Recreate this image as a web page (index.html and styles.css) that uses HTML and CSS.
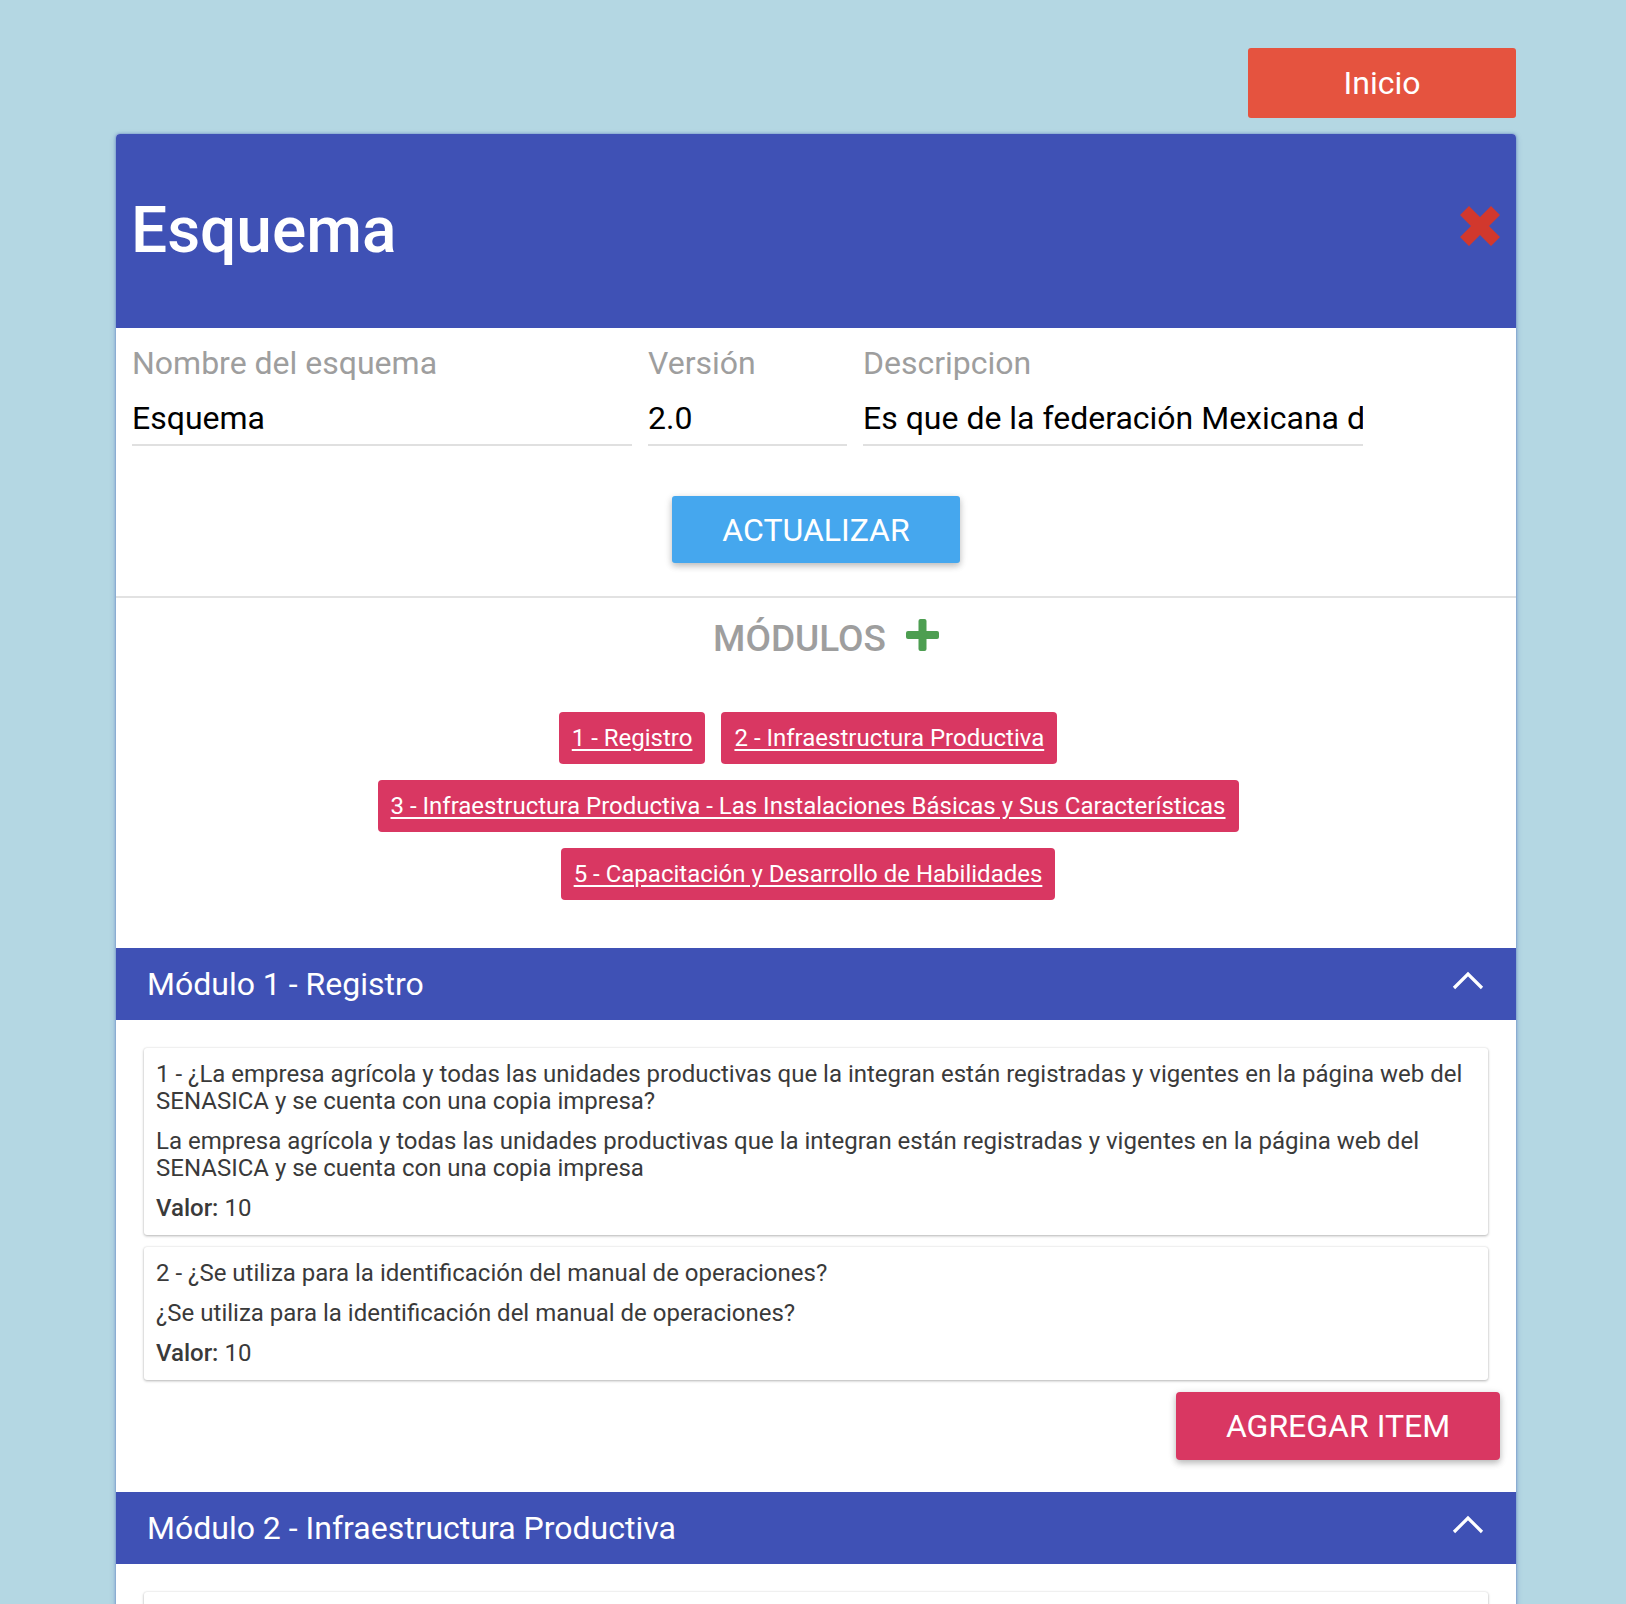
FILE: index.html
```html
<!DOCTYPE html>
<html lang="es">
<head>
<meta charset="utf-8">
<title>Esquema</title>
<link rel="stylesheet" href="styles.css">
</head>
<body>
<div class="page">
  <div class="topbar">
    <a class="btn-inicio" href="#">Inicio</a>
  </div>
  <div class="card">
    <div class="card-header">
      <h1 class="card-title">Esquema</h1>
      <svg class="close-icon" width="40" height="40" viewBox="0 0 40 40" aria-hidden="true">
        <path d="M9 0 L20 11 L31 0 L40 9 L29 20 L40 31 L31 40 L20 29 L9 40 L0 31 L11 20 L0 9 Z" fill="#d2382d"/>
      </svg>
    </div>

    <div class="form">
      <div class="fields">
        <div class="field field-name">
          <div class="field-label">Nombre del esquema</div>
          <div class="field-value">Esquema</div>
        </div>
        <div class="field field-version">
          <div class="field-label">Versión</div>
          <div class="field-value">2.0</div>
        </div>
        <div class="field field-desc">
          <div class="field-label">Descripcion</div>
          <div class="field-value">Es que de la federación Mexicana de productores agrícolas</div>
        </div>
      </div>
      <div class="form-actions">
        <button class="btn-update" type="button">ACTUALIZAR</button>
      </div>
    </div>

    <div class="modules">
      <h2 class="modules-title">MÓDULOS<svg class="plus-icon" width="33" height="32" viewBox="0 0 33 32" aria-hidden="true"><rect x="0" y="12" width="33" height="8" rx="2" fill="#4d9e51"/><rect x="12.5" y="0" width="8" height="32" rx="2" fill="#4d9e51"/></svg></h2>
      <div class="chips">
        <a class="chip" href="#">1 - Registro</a>
        <a class="chip" href="#">2 - Infraestructura Productiva</a>
        <a class="chip" href="#">3 - Infraestructura Productiva - Las Instalaciones Básicas y Sus Características</a>
        <a class="chip" href="#">5 - Capacitación y Desarrollo de Habilidades</a>
      </div>
    </div>

    <section class="module">
      <div class="module-header">
        <span class="module-name">Módulo 1 - Registro</span>
        <svg class="chevron" width="32" height="19" viewBox="0 0 32 19" aria-hidden="true"><polyline points="2,17 16,3 30,17" fill="none" stroke="#ffffff" stroke-width="3.2"/></svg>
      </div>
      <div class="module-body">
        <div class="item">
          <p class="item-q">1 - ¿La empresa agrícola y todas las unidades productivas que la integran están registradas y vigentes en la página web del SENASICA y se cuenta con una copia impresa?</p>
          <p class="item-d">La empresa agrícola y todas las unidades productivas que la integran están registradas y vigentes en la página web del SENASICA y se cuenta con una copia impresa</p>
          <p class="item-v"><span class="item-v-label">Valor:</span> 10</p>
        </div>
        <div class="item">
          <p class="item-q">2 - ¿Se utiliza para la identificación del manual de operaciones?</p>
          <p class="item-d">¿Se utiliza para la identificación del manual de operaciones?</p>
          <p class="item-v"><span class="item-v-label">Valor:</span> 10</p>
        </div>
        <div class="module-actions">
          <button class="btn-add" type="button">AGREGAR ITEM</button>
        </div>
      </div>
    </section>

    <section class="module">
      <div class="module-header">
        <span class="module-name">Módulo 2 - Infraestructura Productiva</span>
        <svg class="chevron" width="32" height="19" viewBox="0 0 32 19" aria-hidden="true"><polyline points="2,17 16,3 30,17" fill="none" stroke="#ffffff" stroke-width="3.2"/></svg>
      </div>
      <div class="module-body">
        <div class="item">
          <p class="item-q">1 - ¿Se cuenta con instalaciones sanitarias en buen estado?</p>
          <p class="item-d">Se cuenta con instalaciones sanitarias en buen estado</p>
          <p class="item-v"><span class="item-v-label">Valor:</span> 10</p>
        </div>
      </div>
    </section>
  </div>
</div>
</body>
</html>
```
FILE: styles.css
```css
html, body {
  margin: 0;
  padding: 0;
}
body {
  background: #b4d7e3;
  font-family: Roboto, "Liberation Sans", Arial, sans-serif;
  color: #000;
}
.page {
  width: 1400px;
  margin-left: 116px;
  padding-top: 48px;
}
.topbar {
  display: flex;
  justify-content: flex-end;
  margin-bottom: 16px;
}
.btn-inicio {
  display: block;
  width: 268px;
  height: 70px;
  line-height: 70px;
  text-align: center;
  background: #e5533f;
  color: #fff;
  font-size: 32px;
  text-decoration: none;
  border-radius: 3px;
}
.card {
  background: #fff;
  border-radius: 4px 4px 0 0;
  box-shadow: 0 0 3px rgba(40, 70, 170, 0.55), 0 2px 6px rgba(40, 70, 170, 0.25);
}
.card-header {
  height: 194px;
  background: #3f51b5;
  border-radius: 4px 4px 0 0;
  display: flex;
  align-items: center;
  justify-content: space-between;
  padding: 0 16px 0 15px;
}
.card-title {
  margin: 0;
  color: #fff;
  font-size: 64px;
  font-weight: 500;
  line-height: 1;
}
.close-icon {
  display: block;
  margin-bottom: 10px;
}
.form {
  padding: 15px 0 0 16px;
  border-bottom: 2px solid #e2e2e2;
}
.fields {
  display: flex;
  gap: 16px;
}
.field-name { width: 500px; }
.field-version { width: 199px; }
.field-desc { width: 500px; }
.field-label {
  font-size: 32px;
  line-height: 40px;
  color: #9e9e9e;
}
.field-value {
  margin-top: 15px;
  font-size: 32px;
  line-height: 40px;
  padding-bottom: 6px;
  border-bottom: 2px solid #e0e0e0;
  white-space: nowrap;
  overflow: hidden;
}
.form-actions {
  display: flex;
  justify-content: center;
  padding: 50px 16px 33px 0;
}
.btn-update {
  width: 288px;
  height: 67px;
  border: none;
  border-radius: 3px;
  background: #45a7ee;
  color: #fff;
  font-family: inherit;
  font-size: 32px;
  padding: 0;
  box-shadow: 0 3px 6px rgba(0, 0, 0, 0.2), 0 2px 10px rgba(0, 0, 0, 0.1);
}
.modules {
  padding-top: 19px;
}
.modules-title {
  margin: 0;
  padding-left: 20px;
  text-align: center;
  font-size: 37px;
  font-weight: 500;
  line-height: 44px;
  color: #9e9e9e;
}
.plus-icon {
  margin-left: 20px;
}
.chips {
  display: flex;
  flex-wrap: wrap;
  justify-content: center;
  gap: 16px;
  padding: 51px 32px 48px 16px;
}
.chip {
  display: block;
  height: 52px;
  line-height: 52px;
  padding: 0 13px;
  background: #d93762;
  color: #fff;
  font-size: 24px;
  border-radius: 4px;
  text-decoration: underline;
  text-underline-offset: 3px;
  white-space: nowrap;
}
.module-header {
  height: 72px;
  background: #3f51b5;
  display: flex;
  align-items: center;
  justify-content: space-between;
  padding: 0 32px 0 31px;
  color: #fff;
}
.module-name {
  font-size: 32px;
  font-weight: 400;
  line-height: 38px;
}
.chevron {
  display: block;
  margin-bottom: 8px;
}
.module-body {
  padding: 28px 28px 32px 28px;
  display: flex;
  flex-direction: column;
  gap: 12px;
}
.item {
  background: #fff;
  border-radius: 3px;
  padding: 13px 12px 13px 12px;
  box-shadow: 0 1px 3px rgba(0, 0, 0, 0.28), 0 0 2px rgba(0, 0, 0, 0.1);
  color: #3a3a3a;
  font-size: 24px;
  line-height: 27px;
}
.item p {
  margin: 0;
}
.item p + p {
  margin-top: 13px;
}
.item-v-label {
  font-weight: 500;
}
.module-actions {
  display: flex;
  justify-content: flex-end;
  margin-right: -12px;
}
.btn-add {
  width: 324px;
  height: 68px;
  border: none;
  border-radius: 4px;
  background: #d93762;
  color: #fff;
  font-family: inherit;
  font-size: 32px;
  padding: 0;
  box-shadow: 0 3px 6px rgba(0, 0, 0, 0.22), 0 2px 10px rgba(0, 0, 0, 0.1);
}
```
